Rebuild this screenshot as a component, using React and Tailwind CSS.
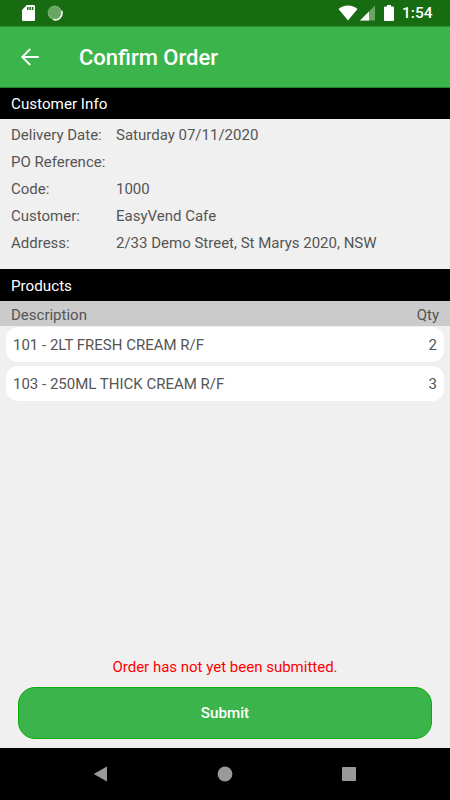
const customerInfo = [
  { label: "Delivery Date:", value: "Saturday 07/11/2020" },
  { label: "PO Reference:", value: "" },
  { label: "Code:", value: "1000" },
  { label: "Customer:", value: "EasyVend Cafe" },
  { label: "Address:", value: "2/33 Demo Street, St Marys 2020, NSW" },
];

const products = [
  { code: "101", name: "2LT FRESH CREAM R/F", qty: 2 },
  { code: "103", name: "250ML THICK CREAM R/F", qty: 3 },
];

function StatusBar() {
  return (
    <div className="flex h-[26px] items-center bg-[#176b10] pr-[17px] pl-[22px] text-white">
      {/* sd card */}
      <svg width="13" height="16" viewBox="0 0 13 16">
        <path
          fillRule="evenodd"
          fill="currentColor"
          d="M4.8 0H11.8Q13 0 13 1.2V14.8Q13 16 11.8 16H1.2Q0 16 0 14.8V5ZM5 2V5H6.5V2ZM7.4 2V5H8.9V2ZM9.8 2V5H11.3V2Z"
        />
      </svg>
      {/* sync spinner */}
      <svg className="ml-3" width="16" height="16" viewBox="0 0 16 16">
        <circle cx="8" cy="8" r="7.2" fill="#68a563" />
        <circle
          cx="7.5"
          cy="7.5"
          r="6.4"
          fill="none"
          stroke="#a5cba2"
          strokeWidth="1"
          strokeDasharray="1 1"
        />
        <path
          d="M14.7 5.8A7 7 0 0 1 6 14.7"
          fill="none"
          stroke="currentColor"
          strokeWidth="1.4"
        />
      </svg>
      <svg
        className="ml-auto"
        width="20"
        height="16"
        viewBox="0 0 20 16"
        fill="currentColor"
      >
        <path d="M10 15.5L0.5 4Q4.5 0.5 10 0.5T19.5 4Z" />
      </svg>
      <svg className="ml-[2px]" width="15" height="16" viewBox="0 0 15 16">
        <path d="M15 0.5V15.5H0Z" fill="#68a563" />
        <path d="M9 6.5V15.5H0Z" fill="currentColor" />
      </svg>
      <svg
        className="ml-[9px]"
        width="10"
        height="16"
        viewBox="0 0 10 16"
        fill="currentColor"
      >
        <path d="M3 0H7V1.5H9Q10 1.5 10 2.5V15Q10 16 9 16H1Q0 16 0 15V2.5Q0 1.5 1 1.5H3Z" />
      </svg>
      <span className="ml-[8px] w-[31px] pt-[2px] text-[15.5px] leading-none font-medium whitespace-nowrap">
        1:54
      </span>
    </div>
  );
}

function SectionTitle({ children }) {
  return (
    <h2 className="flex h-full items-center bg-black px-[11px] pt-[2px] text-[15.2px] text-white">
      {children}
    </h2>
  );
}

export default function App() {
  return (
    <div className="flex h-[800px] w-[450px] flex-col bg-[#f0f0f0] font-['Roboto',sans-serif] text-[15px] text-[#555555]">
      <StatusBar />

      <header className="flex h-[62px] items-center border-t border-b border-t-[#2c9335] border-b-[#258231] bg-[#3bb54b] pl-[21px] text-white">
        <svg
          width="18"
          height="18"
          viewBox="0 0 18 18"
          fill="none"
          stroke="currentColor"
          strokeWidth="1.8"
        >
          <path d="M17.7 9H1.5M9.2 1L1.2 9L9.2 17" />
        </svg>
        <h1 className="ml-[40px] text-[22px] font-medium">Confirm Order</h1>
      </header>

      <div className="h-[31px]">
        <SectionTitle>Customer Info</SectionTitle>
      </div>
      <div className="h-[150px] px-[11px] pt-[2px]">
        {customerInfo.map((row) => (
          <div key={row.label} className="flex h-[27px] items-center pt-px">
            <span className="w-[105px]">{row.label}</span>
            <span>{row.value}</span>
          </div>
        ))}
      </div>

      <div className="h-8">
        <SectionTitle>Products</SectionTitle>
      </div>
      <div className="flex h-[25px] items-center justify-between bg-[#cbcbcb] pt-[3px] pr-[11px] pl-[11px]">
        <span>Description</span>
        <span>Qty</span>
      </div>
      <ul className="flex flex-col gap-1 px-[6px] pt-[0.5px]">
        {products.map((product) => (
          <li
            key={product.code}
            className="flex h-[35px] items-center justify-between rounded-[12px] bg-white px-[7px] pt-[3px]"
          >
            <span>
              {product.code} - {product.name}
            </span>
            <span>{product.qty}</span>
          </li>
        ))}
      </ul>

      <div className="mt-auto px-[18px] pb-[9px] text-center">
        <p className="mb-[9px] text-[#ff0000]">
          Order has not yet been submitted.
        </p>
        <button
          type="button"
          className="block h-[52px] w-full rounded-[17px] border border-[#0bac0b] bg-[#3bb54b] pt-px text-[15.2px] font-medium text-white"
        >
          Submit
        </button>
      </div>

      <nav className="flex h-[52px] items-center justify-between bg-black pr-[94px] pl-[93px] text-[#999999]">
        <svg width="14" height="16" viewBox="0 0 14 16" fill="currentColor">
          <path d="M14 0.5V15.5L0.7 8Z" />
        </svg>
        <svg width="16" height="16" viewBox="0 0 16 16" fill="currentColor">
          <circle cx="8" cy="8" r="7.4" />
        </svg>
        <svg width="14" height="14" viewBox="0 0 14 14" fill="currentColor">
          <rect width="14" height="14" rx="0.7" />
        </svg>
      </nav>
    </div>
  );
}
